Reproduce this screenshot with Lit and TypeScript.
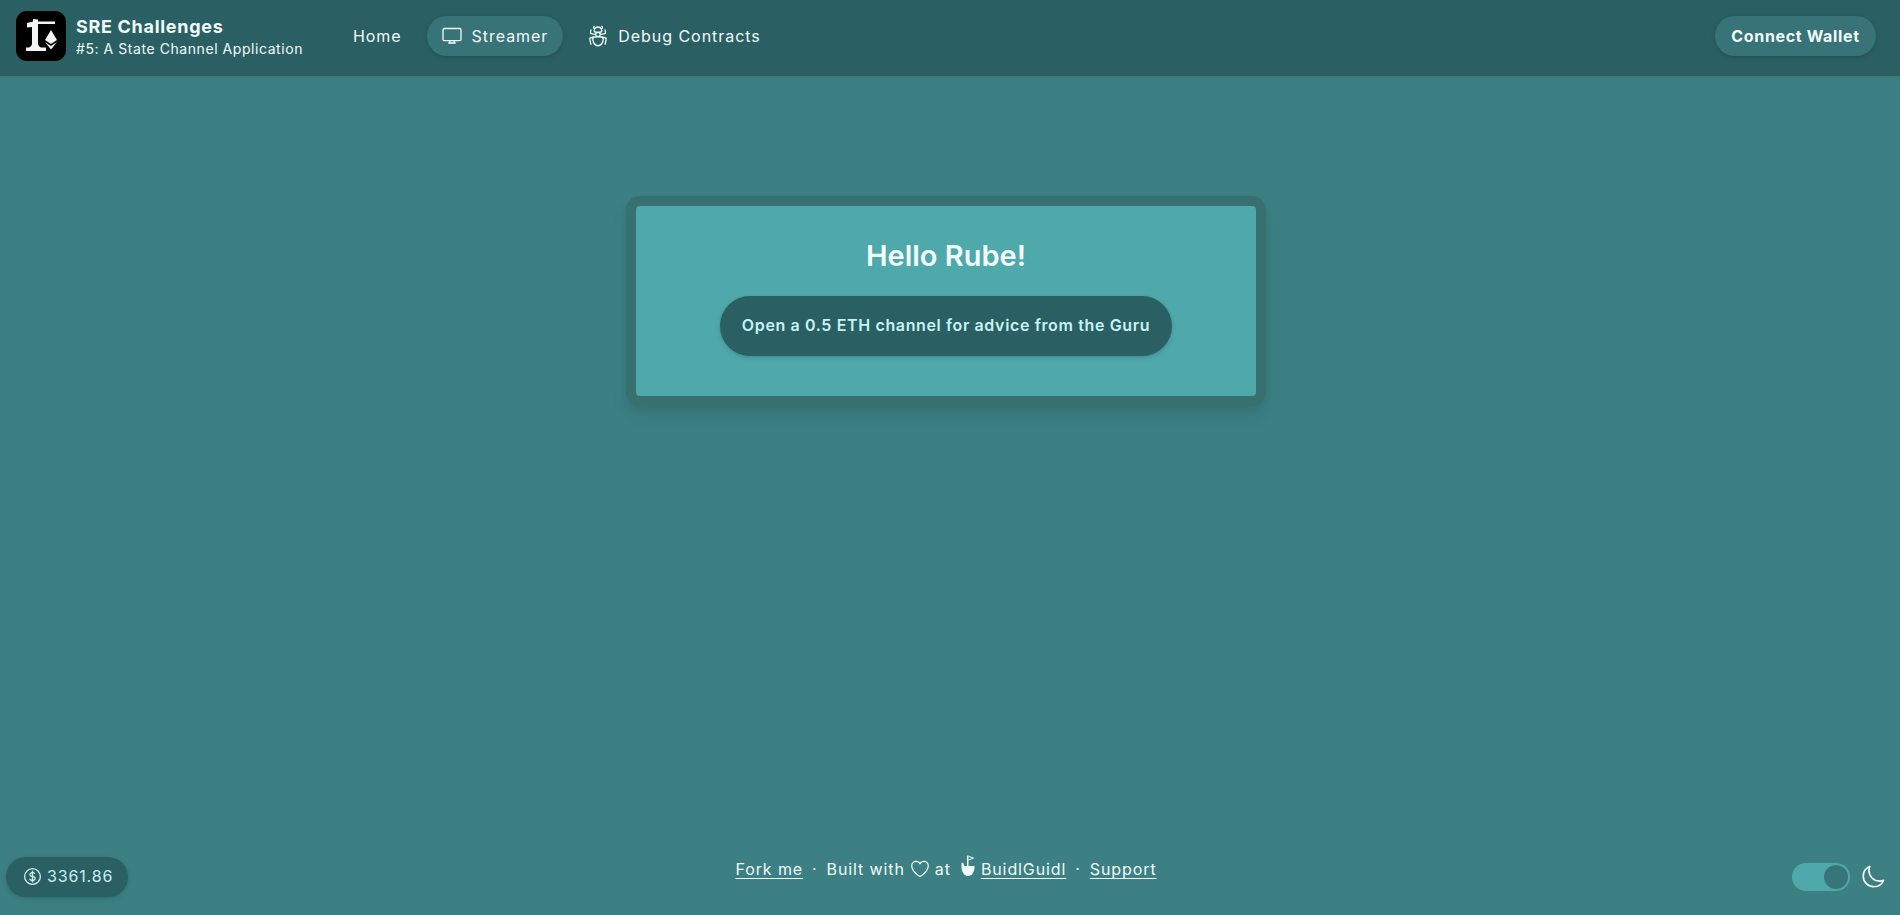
import { LitElement, html, css, svg } from "lit";
import { customElement } from "lit/decorators.js";

const icon = (d: string, cls: string) => html`<svg class=${cls} viewBox="0 0 24 24" fill="none" stroke="currentColor" stroke-width="1.5" stroke-linecap="round" stroke-linejoin="round">${svg`<path d=${d}></path>`}</svg>`;

const DESKTOP = "M4.500 4.500h15a1.500 1.500 0 011.500 1.500v9.200a1.500 1.500 0 01-1.500 1.500h-15A1.500 1.500 0 013 15.200V6a1.500 1.500 0 011.500-1.500zM10 16.700v1.300l-1.200 1h6.400l-1.200-1v-1.300";
const BUG = "M12 12.75c1.148 0 2.278.08 3.383.237 1.037.146 1.866.966 1.866 2.013 0 3.728-2.35 6.75-5.25 6.75S6.75 18.728 6.75 15c0-1.046.83-1.867 1.866-2.013A24.204 24.204 0 0112 12.75zm0 0c2.883 0 5.647.508 8.207 1.44a23.91 23.91 0 01-1.152 6.06M12 12.75c-2.883 0-5.647.508-8.208 1.44.125 2.104.52 4.136 1.153 6.06M12 12.75a2.25 2.25 0 002.248-2.354M12 12.75a2.25 2.25 0 01-2.248-2.354M12 8.25c.995 0 1.971-.08 2.922-.236.403-.066.74-.358.795-.762a3.778 3.778 0 00-.399-2.25M12 8.25c-.995 0-1.97-.08-2.922-.236-.402-.066-.74-.358-.795-.762a3.734 3.734 0 01.4-2.253M12 8.25a2.25 2.25 0 00-2.248 2.146M12 8.25a2.25 2.25 0 012.248 2.146M8.683 5a6.032 6.032 0 01-1.155-1.002c.07-.63.27-1.222.574-1.747m.581 2.749A3.75 3.75 0 0115.318 5m0 0c.427-.283.815-.62 1.155-.999a4.471 4.471 0 00-.575-1.752M4.921 6a24.048 24.048 0 00-.392 3.314c1.668.546 3.416.914 5.223 1.082M19.08 6c.205 1.08.337 2.187.392 3.314a23.882 23.882 0 01-5.223 1.082";
const MOON = "M21.752 15.002A9.718 9.718 0 0118 15.75c-5.385 0-9.75-4.365-9.75-9.75 0-1.33.266-2.597.748-3.752A9.753 9.753 0 003 11.25C3 16.635 7.365 21 12.75 21a9.753 9.753 0 009.002-5.998z";
const HEART = "M21 8.25c0-2.485-2.099-4.5-4.688-4.5-1.935 0-3.597 1.126-4.312 2.733-.715-1.607-2.377-2.733-4.313-2.733C5.1 3.75 3 5.765 3 8.25c0 7.22 9 12 9 12s9-4.78 9-12z";
const DOLLAR = "M12 6v12m-3-2.818l.879.659c1.171.879 3.07.879 4.242 0 1.172-.879 1.172-2.303 0-3.182C13.536 12.219 12.768 12 12 12c-.725 0-1.45-.22-2.003-.659-1.106-.879-1.106-2.303 0-3.182s2.9-.879 4.006 0l.415.33M21 12a9 9 0 11-18 0 9 9 0 0118 0z";

@customElement("app-root")
export class AppRoot extends LitElement {
  static styles = css`
    :host {
      display: flex;
      flex-direction: column;
      height: 915px;
      overflow: hidden;
      background: #3c8083;
      color: #f0fbfb;
      font-family: Inter, "Liberation Sans", sans-serif;
      font-size: 16px;
    }
    svg { display: block; flex: none; }
    .header {
      height: 76px;
      flex: none;
      box-sizing: border-box;
      display: flex;
      align-items: center;
      justify-content: space-between;
      padding: 0 24px 4px 16px;
      background: #2a6063;
      box-shadow: 0 1px 3px rgba(0,0,0,.08);
    }
    .left { display: flex; align-items: center; }
    .brand { display: flex; align-items: center; gap: 10px; margin-right: 35px; }
    .logo { width: 50px; height: 50px; }
    .brand-text { display: flex; flex-direction: column; padding-top: 2px; }
    .brand-title { font-size: 18px; line-height: 24px; font-weight: 700; letter-spacing: .7px; }
    .brand-sub { font-size: 14px; line-height: 20px; letter-spacing: .56px; }
    .nav { display: flex; align-items: center; gap: 10px; }
    .nav-item {
      display: flex;
      align-items: center;
      gap: 8px;
      height: 40px;
      padding: 0 15px;
      border-radius: 20px;
      font-size: 16px;
      letter-spacing: .95px;
    }
    .nav-item.with-icon { padding-left: 13px; }
    .nav-item.active { background: #387377; box-shadow: 0 1px 3px rgba(0,0,0,.1), 0 2px 6px rgba(0,0,0,.08); }
    .nav-icon { width: 24px; height: 24px; stroke-width: 1.3; }
    .connect {
      height: 40px;
      width: 161px;
      border-radius: 20px;
      background: #387377;
      box-shadow: 0 1px 3px rgba(0,0,0,.1), 0 2px 6px rgba(0,0,0,.08);
      display: flex;
      align-items: center;
      justify-content: center;
      font-size: 16px;
      font-weight: 700;
      letter-spacing: .65px;
    }
    .main {
      flex: 1;
      display: flex;
      flex-direction: column;
      align-items: center;
      padding: 120px 8px 0 0;
    }
    .card-frame {
      width: 640px;
      box-sizing: border-box;
      padding: 10px 10px;
      border-radius: 14px;
      background: #37706f;
      box-shadow: 0 10px 16px rgba(0,0,0,.08), 0 4px 6px rgba(0,0,0,.05);
    }
    .card {
      height: 190px;
      border-radius: 4px;
      background: #4fa8aa;
      display: flex;
      flex-direction: column;
      align-items: center;
      box-sizing: border-box;
      padding-top: 30px;
    }
    .card h1 {
      margin: 0 0 20px;
      font-size: 29px;
      line-height: 40px;
      font-weight: 600;
      color: #f2fdfd;
    }
    .cta {
      height: 60px;
      width: 452px;
      box-sizing: border-box;
      padding-bottom: 2px;
      border-radius: 30px;
      background: #2a6063;
      color: #c9f3f3;
      font-size: 16px;
      font-weight: 600;
      letter-spacing: .63px;
      display: flex;
      align-items: center;
      justify-content: center;
      box-shadow: 0 1px 3px rgba(0,0,0,.1), 0 2px 6px rgba(0,0,0,.08);
    }
    .footer {
      flex: none;
      display: grid;
      grid-template-columns: 1fr auto 1fr;
      align-items: start;
      padding: 0 14px 18px 6px;
    }
    .price {
      justify-self: start;
      height: 40px;
      width: 122px;
      box-sizing: border-box;
      padding: 0 0 2px 16px;
      border-radius: 20px;
      background: #2a6063;
      color: #c9eeee;
      display: flex;
      align-items: center;
      gap: 4px;
      font-size: 16px;
      letter-spacing: .85px;
      box-shadow: 0 1px 3px rgba(0,0,0,.1), 0 2px 6px rgba(0,0,0,.08);
    }
    .price svg { width: 21px; height: 21px; }
    .links {
      display: flex;
      align-items: center;
      gap: 9px;
      height: 24px;
      font-size: 16px;
      letter-spacing: .9px;
    }
    .links a { color: inherit; text-decoration: underline; text-underline-offset: 3px; }
    .with { display: flex; align-items: center; gap: 4px; }
    .heart { width: 22px; height: 22px; stroke-width: 1.3; }
    .guild { display: flex; align-items: center; gap: 5px; }
    .bg { width: 16px; height: 22px; margin-top: -6px; }
    .theme { justify-self: end; display: flex; align-items: center; gap: 10px; height: 40px; }
    .toggle {
      width: 58px;
      height: 28px;
      box-sizing: border-box;
      border-radius: 14px;
      background: #4fa8aa;
      padding: 2px;
      display: flex;
      justify-content: flex-end;
    }
    .knob { width: 24px; height: 24px; border-radius: 50%; background: #38757a; }
    .moon { width: 26px; height: 26px; color: #f4fdfd; }
  `;

  render() {
    return html`
      <header class="header">
        <div class="left">
          <div class="brand">
            <svg class="logo" viewBox="0 0 50 50">
              <rect width="50" height="50" rx="11" fill="#000"></rect>
              <path fill="#f4f4f4" d="M17 8l5 .5V10.500H39V13H22V32c0 2 1 3.500 3 4.500h5V40H10v-3.500h3c2-1 3-2.500 3-4.500V16l-5 .5V12l6-1.500z"></path>
              <path fill="#f4f4f4" d="M35 19l6 10-6 4-6-4z"></path>
              <path fill="#f4f4f4" d="M29 31l6 4 6-4-6 7.500z"></path>
            </svg>
            <div class="brand-text">
              <span class="brand-title">SRE Challenges</span>
              <span class="brand-sub">#5: A State Channel Application</span>
            </div>
          </div>
          <nav class="nav">
            <div class="nav-item">Home</div>
            <div class="nav-item with-icon active">${icon(DESKTOP, "nav-icon")}<span>Streamer</span></div>
            <div class="nav-item with-icon">${icon(BUG, "nav-icon")}<span>Debug Contracts</span></div>
          </nav>
        </div>
        <div class="connect">Connect Wallet</div>
      </header>
      <main class="main">
        <div class="card-frame">
          <div class="card">
            <h1>Hello Rube!</h1>
            <div class="cta">Open a 0.5 ETH channel for advice from the Guru</div>
          </div>
        </div>
      </main>
      <footer class="footer">
        <div class="price">${icon(DOLLAR, "")}<span>3361.86</span></div>
        <div class="links">
          <a>Fork me</a><span>·</span>
          <span class="with">Built with ${icon(HEART, "heart")} at</span>
          <span class="guild">
            <svg class="bg" viewBox="0 0 16 22">
              <path fill="#f0fbfb" d="M7 .5h1.500V11h6c.4 5-2 10-6.500 10S1 16 1.500 8c.8-.5 1.500-.5 2 .5l.8 2.500H7z"></path>
              <path fill="none" stroke="#f0fbfb" stroke-width="1" d="M8.500 1.300l5 1.700-5 2"></path>
            </svg>
            <a>BuidlGuidl</a>
          </span>
          <span>·</span><a>Support</a>
        </div>
        <div class="theme">
          <div class="toggle"><div class="knob"></div></div>
          ${icon(MOON, "moon")}
        </div>
      </footer>
    `;
  }
}
